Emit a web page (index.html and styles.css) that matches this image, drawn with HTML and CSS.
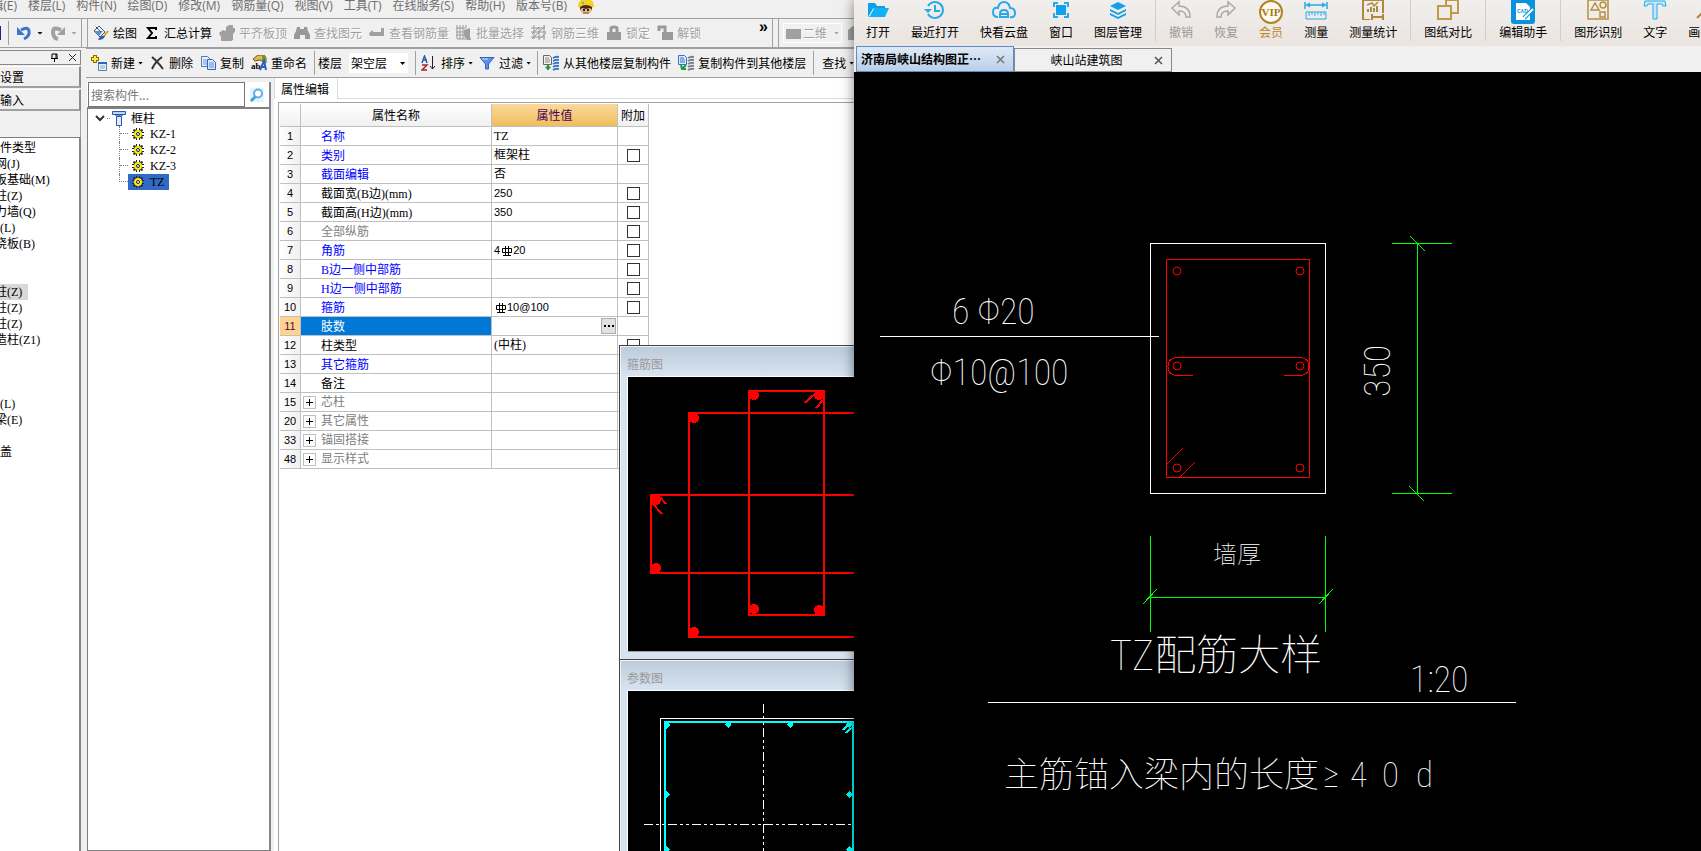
FILE: index.html
```html
<!DOCTYPE html>
<html lang="zh-CN">
<head>
<meta charset="utf-8">
<title>属性编辑</title>
<link rel="stylesheet" href="styles.css">
</head>
<body>
<main class="desktop">
<section class="app">
  <nav class="menu">
    <a href="#">辑(E)</a><a href="#">楼层(L)</a><a href="#">构件(N)</a><a href="#">绘图(D)</a><a href="#">修改(M)</a><a href="#">钢筋量(Q)</a><a href="#">视图(V)</a><a href="#">工具(T)</a><a href="#">在线服务(S)</a><a href="#">帮助(H)</a><a href="#">版本号(B)</a>
    <svg class="ico" viewBox="0 0 16 16"><path d="M2 8h12v4q-1 4-6 4t-6-4z" fill="#e9b98c"/><path d="M0 9Q0 1 8 1t8 8l-3 1Q8 6 3 10z" fill="#f6cf22"/><path d="M2 9q6-4 12 0v3l-2-2-4 1-4-1-2 2z" fill="#4a2a17"/><path d="M5 12h2M9 12h2" stroke="#222" stroke-width="2"/><path d="M5 15h6" stroke="#8a4a2a"/><circle cx="5" cy="5" r="1" fill="#3af"/></svg>
  </nav>

  <div class="bar bar-main">
    <div class="quick">
      <i class="save-edge"></i><i class="rule"></i>
      <button class="tool" aria-label="撤销"><svg class="ico" viewBox="0 0 16 16"><path d="M5 5Q12 1 13 6T8 14" fill="none" stroke="#3f74c9" stroke-width="3"/><path d="M1 2v8h8z" fill="#3f74c9"/></svg><i class="caret"></i></button>
      <button class="tool off" aria-label="恢复"><svg class="ico" viewBox="0 0 16 16"><path d="M11 5Q3 1 3 7t5 7" fill="none" stroke="#a0a0a0" stroke-width="4"/><path d="M15 2v8H7z" fill="#a0a0a0"/></svg><i class="caret"></i></button>
    </div>
    <div class="tools">
      <button class="tool"><svg class="ico" viewBox="0 0 16 16"><path d="M1 6l5-5 6 6-5 5z" fill="#eef4fb" stroke="#456" /><path d="M1 6h9l-4 5z" fill="#5b8fd8"/><path d="M3 2l5 5" stroke="#456"/><path d="M15 6l-4 5" stroke="#d8a020" stroke-width="2"/><path d="M5 15q2-5 7-4-1 4-7 4z" fill="#2d5fb8"/></svg>绘图</button>
      <button class="tool"><svg class="ico" viewBox="0 0 16 16"><path d="M12 5V3H4l4 5-4 5h8v-2" fill="none" stroke="#000" stroke-width="2"/></svg>汇总计算</button>
      <button class="tool off"><svg class="ico" viewBox="0 0 16 16"><path d="M0 8l4-3 3 1V2l3-2h4v3h2v4l-2 2v6l-2 1H2v-4z" fill="#a0a0a0"/></svg>平齐板顶</button>
      <button class="tool off"><svg class="ico" viewBox="0 0 16 16"><path d="M3 2h3v2h4V2h3l1 4 2 4v4h-5v-4H6v4H0v-4l2-4z" fill="#999"/></svg>查找图元</button>
      <button class="tool off"><svg class="ico" viewBox="0 0 16 16"><path d="M0 8l4-3v2h8V3h3v8H1z" fill="#a0a0a0"/></svg>查看钢筋量</button>
      <button class="tool off"><svg class="ico" viewBox="0 0 16 16"><path d="M1 0v14h9M4 0v14M7 0v14M0 3h10M0 7h8M0 10h8M10 0v3" fill="none" stroke="#999"/><path d="M8 5l6-2v8l1 4h-4l-3-4z" fill="#a0a0a0"/></svg>批量选择</button>
      <button class="tool off"><svg class="ico" viewBox="0 0 16 16"><path d="M0 3h14M0 7h15M0 12h14M3 0v14M8 2v13M13 0v15M1 14L14 1M1 9l7-7M8 14l7-6" fill="none" stroke="#999"/></svg>钢筋三维</button>
      <button class="tool off"><svg class="ico" viewBox="0 0 16 16"><path d="M1 7h14v8H1z" fill="#999"/><path d="M5 7V3q0-1 3-1t3 1v4" fill="none" stroke="#999" stroke-width="3"/></svg>锁定</button>
      <button class="tool off"><svg class="ico" viewBox="0 0 16 16"><path d="M5 7h11v8H5z" fill="#999"/><path d="M2 6V2h6v5" fill="none" stroke="#999" stroke-width="3"/></svg>解锁</button>
      <span class="more">»</span>
    </div>
    <div class="view">
      <button class="tool off mode"><svg class="ico" viewBox="0 0 16 16"><path d="M0 4h15v10H0z" fill="#a0a0a0"/></svg>二维<i class="caret"></i></button>
      <svg class="ico edge" viewBox="0 0 16 16"><path d="M0 5l5-4h11v14H0z" fill="#a0a0a0"/></svg>
    </div>
  </div>

  <div class="work">
    <aside class="side">
      <div class="side-title">
        <svg class="mini" viewBox="0 0 9 9"><path d="M2 5V1h5v4M1 5.500h7M4.500 6v3M6 1v4" fill="none" stroke="#000"/></svg>
        <svg class="mini" viewBox="0 0 9 9"><path d="M1 1l7 7M8 1L1 8" fill="none" stroke="#222"/></svg>
      </div>
      <button class="side-btn">设置</button>
      <button class="side-btn">输入</button>
      <div class="side-gap"></div>
      <ul class="kinds">
        <li class="in">件类型</li><li>网(J)</li><li>板基础(M)</li><li>柱(Z)</li><li>力墙(Q)</li><li class="in">(L)</li><li>浇板(B)</li><li></li><li></li><li><span class="on">柱(Z)</span></li><li>柱(Z)</li><li>柱(Z)</li><li>造柱(Z1)</li><li></li><li></li><li></li><li class="in">(L)</li><li>梁(E)</li><li></li><li class="in">盖</li>
      </ul>
    </aside>

    <div class="center">
      <div class="bar bar-item">
        <div class="grp">
          <button class="tool"><svg class="ico" viewBox="0 0 16 16"><path d="M4 0v8M0 4h8" stroke="#8a7000" stroke-width="4"/><path d="M4 1v6M1 4h6" stroke="#ffe84a" stroke-width="2"/><path d="M7.500 7.500h8v8h-8z" fill="#e6f0fc" stroke="#5b7fae"/><path d="M7 8h9" stroke="#2d66b8" stroke-width="2"/><path d="M9 11h5M9 13h5" stroke="#8aa8cc"/></svg>新建<i class="caret"></i></button>
          <button class="tool"><svg class="ico" viewBox="0 0 16 16"><path d="M3 2q5 4 11 12M13 2Q6 7 3 14" fill="none" stroke="#333" stroke-width="2"/></svg>删除</button>
          <button class="tool"><svg class="ico" viewBox="0 0 16 16"><path d="M1.500 1.500h6l2 2v8h-8z" fill="#e8f1fc" stroke="#4a78b8"/><path d="M3 5h4M3 7h4M3 9h4" stroke="#6b96d0"/><path d="M7.500 4.500h5l3 3v7h-8z" fill="#dbe9fa" stroke="#3568b0"/><path d="M9 8h5M9 10h5M9 12h5" stroke="#5b8fd8"/></svg>复制</button>
          <button class="tool"><svg class="ico" viewBox="0 0 16 16"><path d="M2 4l5-4h6l2 3v5L9 5 4 6z" fill="#e0b850" stroke="#6b5520"/><path d="M11 1h4v5h-4z" fill="#6a9a40"/><text x="0" y="14" class="t-ab">ab</text><path d="M9 15l4-9 2 9M10 12h5" fill="none" stroke="#2d5fc0" stroke-width="2"/></svg>重命名</button>
        </div>
        <div class="grp floor">
          <label for="floor">楼层</label>
          <span class="pick"><select id="floor"><option>架空层</option></select><i class="caret"></i></span>
        </div>
        <div class="grp">
          <button class="tool"><svg class="ico" viewBox="0 0 16 16"><path d="M1 8l2.500-7L6 8M2 5h4" fill="none" stroke="#2d5fb0" stroke-width="1.500"/><path d="M1 10h5l-5 5h5" fill="none" stroke="#a02828" stroke-width="1.500"/><path d="M11.500 1v13M9 11l2.500 3 2.500-3" fill="none" stroke="#222"/></svg>排序<i class="caret"></i></button>
          <button class="tool"><svg class="ico" viewBox="0 0 16 16"><path d="M1 2.500h14L9.500 9v5h-3V9z" fill="#5a93e8" stroke="#3464b4"/><path d="M3 4h6" stroke="#cfe2ff"/></svg>过滤<i class="caret"></i></button>
        </div>
        <div class="grp">
          <button class="tool"><svg class="ico" viewBox="0 0 16 16"><path d="M.5.500h6l2 2v7h-8z" fill="#f2f2f2" stroke="#666"/><path d="M2 3h4M2 5h5M2 7h5" stroke="#888"/><path d="M5 10v5M2.500 12.500h5" stroke="#1c9b3c" stroke-width="2"/><path d="M10 3q3-2 6-1M10 6q3-2 6-1M10 9q3-2 6-1M10 12q3-2 6-1M10 15q3-2 6-1" fill="none" stroke="#3b73c4" stroke-width="2"/></svg>从其他楼层复制构件</button>
          <button class="tool"><svg class="ico" viewBox="0 0 16 16"><path d="M.5.500h6l2 2v7h-8z" fill="#dceafc" stroke="#3b73c4"/><path d="M2 3h4M2 5h5M2 7h5" stroke="#3b73c4"/><path d="M3 10l1 4 4 0M4 14l4-4" fill="none" stroke="#1c9b3c" stroke-width="2"/><path d="M10 3q3-2 6-1M10 6q3-2 6-1M10 9q3-2 6-1M10 12q3-2 6-1M10 15q3-2 6-1" fill="none" stroke="#76808c" stroke-width="2"/></svg>复制构件到其他楼层</button>
        </div>
        <div class="grp find"><button class="tool">查找<i class="caret"></i></button></div>
      </div>

      <div class="panes">
        <section class="tree-pane">
          <div class="search">
            <input type="text" placeholder="搜索构件..." aria-label="搜索构件">
            <button aria-label="搜索"><svg class="ico" viewBox="0 0 16 16"><path d="M1 1h14v14H1z" fill="#e6f3fc"/><circle cx="9" cy="6.500" r="4" fill="#fff" stroke="#5cb0e8" stroke-width="2"/><path d="M6.500 9.500L2 14" stroke="#48a0dc" stroke-width="3"/></svg></button>
          </div>
          <div class="tree">
            <div class="root">
              <svg class="chev" viewBox="0 0 10 8"><path d="M1 2l4 4 4-4" fill="none" stroke="#333" stroke-width="2"/></svg>
              <i class="link"></i>
              <svg class="ico" viewBox="0 0 16 16"><path d="M1.500 1.500h13v3h-13z" fill="#bcd6f8" stroke="#2b57a8"/><path d="M4 5.500h8" stroke="#5b8fd8"/><path d="M5.500 6.500h5v9h-5z" fill="#dcebff" stroke="#2b57a8"/></svg>
              <span>框柱</span>
            </div>
            <ul>
              <li><i class="link"></i><span class="leaf"><svg class="gear" viewBox="0 0 12 12"><use href="#gear"/></svg>KZ-1</span></li>
              <li><i class="link"></i><span class="leaf"><svg class="gear" viewBox="0 0 12 12"><use href="#gear"/></svg>KZ-2</span></li>
              <li><i class="link"></i><span class="leaf"><svg class="gear" viewBox="0 0 12 12"><use href="#gear"/></svg>KZ-3</span></li>
              <li><i class="link"></i><span class="leaf sel"><svg class="gear" viewBox="0 0 12 12"><use href="#gear"/></svg>TZ</span></li>
            </ul>
          </div>
        </section>

        <section class="props">
          <div class="tabs"><button class="tab">属性编辑</button></div>
          <div class="sheet">
            <table>
              <thead><tr><th class="c-no"></th><th class="c-name">属性名称</th><th class="c-val hot">属性值</th><th class="c-add">附加</th></tr></thead>
              <tbody>
                <tr><th>1</th><td class="key">名称</td><td>TZ</td><td></td></tr>
                <tr><th>2</th><td class="key">类别</td><td>框架柱</td><td><input type="checkbox" aria-label="附加 类别"></td></tr>
                <tr><th>3</th><td class="key">截面编辑</td><td>否</td><td></td></tr>
                <tr><th>4</th><td>截面宽(B边)(mm)</td><td class="num">250</td><td><input type="checkbox" aria-label="附加 截面宽"></td></tr>
                <tr><th>5</th><td>截面高(H边)(mm)</td><td class="num">350</td><td><input type="checkbox" aria-label="附加 截面高"></td></tr>
                <tr><th>6</th><td class="dim">全部纵筋</td><td></td><td><input type="checkbox" aria-label="附加 全部纵筋"></td></tr>
                <tr><th>7</th><td class="key">角筋</td><td class="num">4<svg class="bar-sym" viewBox="0 0 10 11"><use href="#rebar"/></svg>20</td><td><input type="checkbox" aria-label="附加 角筋"></td></tr>
                <tr><th>8</th><td class="key">B边一侧中部筋</td><td></td><td><input type="checkbox" aria-label="附加 B边"></td></tr>
                <tr><th>9</th><td class="key">H边一侧中部筋</td><td></td><td><input type="checkbox" aria-label="附加 H边"></td></tr>
                <tr><th>10</th><td class="key">箍筋</td><td class="num"><svg class="bar-sym" viewBox="0 0 10 11"><use href="#rebar"/></svg>10@100</td><td><input type="checkbox" aria-label="附加 箍筋"></td></tr>
                <tr class="cur"><th>11</th><td>肢数</td><td><button class="dots" aria-label="编辑肢数"><i></i><i></i><i></i></button></td><td></td></tr>
                <tr><th>12</th><td>柱类型</td><td>(中柱)</td><td><input type="checkbox" aria-label="附加 柱类型"></td></tr>
                <tr><th>13</th><td class="key">其它箍筋</td><td></td><td></td></tr>
                <tr><th>14</th><td>备注</td><td></td><td></td></tr>
                <tr><th>15</th><td class="dim fold"><button class="plus" aria-label="展开 芯柱"></button>芯柱</td><td></td><td></td></tr>
                <tr><th>20</th><td class="dim fold"><button class="plus" aria-label="展开 其它属性"></button>其它属性</td><td></td><td></td></tr>
                <tr><th>33</th><td class="dim fold"><button class="plus" aria-label="展开 锚固搭接"></button>锚固搭接</td><td></td><td></td></tr>
                <tr><th>48</th><td class="dim fold"><button class="plus" aria-label="展开 显示样式"></button>显示样式</td><td></td><td></td></tr>
              </tbody>
            </table>
          </div>
        </section>
      </div>
    </div>
  </div>

  <div class="floaters">
    <section class="win">
      <h2>箍筋图</h2>
      <svg class="plot" viewBox="628 377 226 274" preserveAspectRatio="xMinYMin slice">
        <g fill="none" stroke="#f00" stroke-width="2"><path d="M749 391h75v224h-75zM860 413H689v224h171M860 495H651v78h209"/><path d="M805 403q6-7 12-10M816 408l7-8M660 497l6 7M653 504l9 10"/></g>
        <g fill="#f00"><circle cx="754" cy="395" r="5"/><circle cx="819" cy="395" r="5"/><circle cx="694" cy="418" r="5"/><circle cx="656" cy="500" r="5"/><circle cx="656" cy="568" r="5"/><circle cx="754" cy="609" r="5"/><circle cx="819" cy="610" r="5"/><circle cx="694" cy="632" r="5"/></g>
      </svg>
    </section>
    <section class="win last">
      <h2>参数图</h2>
      <svg class="plot" viewBox="628 691 226 160" preserveAspectRatio="xMinYMin slice">
        <path d="M660.500 860V718.500H860" fill="none" stroke="#fff"/>
        <path d="M763.500 704v160M644 824.500h214" stroke="#fff" stroke-dasharray="9 3 3 3 3 3"/>
        <path d="M665 860V722h188v138M843 730q3-4 9-6M846 733q2-3 7-6" fill="none" stroke="#0ff" stroke-width="2"/>
        <path d="M666 721l4 4-4 4zM728.500 721l3 3.500-3 3.500-3-3.500zM790.500 721l3 3.500-3 3.500-3-3.500zM849.500 721l3 3.500-3 3.500-3-3.500zM666 791l4 3.500-4 3.500zM849.500 791l3 3.500-3 3.500-3-3.500zM666 846l4 3.500-4 3.500zM849.500 846l3 3.500-3 3.500-3-3.500z" fill="#0ff"/>
      </svg>
    </section>
  </div>
</section>

<section class="cad">
  <div class="ribbon">
    <button class="cmd"><svg class="big" viewBox="0 0 24 20"><path d="M2 17V3h7l2 3h8v3H7z" fill="#0aa0ea"/><path d="M7 8h16l-4 9H3z" fill="#12b0f5"/><path d="M7.500 8.500L3.500 16" stroke="#eee"/></svg>打开</button>
    <button class="cmd"><svg class="big" viewBox="0 0 24 20"><path d="M5 6a8 8 0 1 1 0 8" fill="none" stroke="#28a9e8" stroke-width="2"/><path d="M1 9h8l-4 4z" fill="#28a9e8"/><path d="M12 5v6h5" fill="none" stroke="#28a9e8" stroke-width="2"/></svg>最近打开</button>
    <button class="cmd"><svg class="big" viewBox="0 0 24 20"><path d="M6 17Q1 17 1 12t5-4Q7 2 12 2t6 6q5 0 5 5t-5 4" fill="none" stroke="#28a9e8" stroke-width="2"/><path d="M8 17v-3q0-4 4-4t4 4v3zM8 14h8" fill="none" stroke="#28a9e8" stroke-width="2"/></svg>快看云盘</button>
    <button class="cmd"><svg class="big" viewBox="0 0 24 20"><path d="M7 5h10v10H7z" fill="#12a0ea"/><path d="M5 7V3h4M15 3h4v4M19 13v4h-4M9 17H5v-4" fill="none" stroke="#28a9e8" stroke-width="2"/></svg>窗口</button>
    <button class="cmd"><svg class="big" viewBox="0 0 24 20"><path d="M12 2l8 4-8 4-8-4z" fill="#12a0ea"/><path d="M4 9l8 4 8-4v2l-8 4-8-4zM4 13l8 4 8-4v2l-8 4-8-4z" fill="#12a0ea"/></svg>图层管理</button>
    <i class="split"></i>
    <button class="cmd off"><svg class="big" viewBox="0 0 24 20"><path d="M3 8l7-6v4q11 0 11 11h-4q0-6-7-6v4z" fill="none" stroke="#aaa" stroke-width="1.500"/></svg>撤销</button>
    <button class="cmd off"><svg class="big" viewBox="0 0 24 20"><path d="M21 8l-7-6v4Q3 6 3 17h4q0-6 7-6v4z" fill="none" stroke="#aaa" stroke-width="1.500"/></svg>恢复</button>
    <button class="cmd gold"><svg class="big tall" viewBox="0 0 24 24"><circle cx="12" cy="12" r="11" fill="#fffaf0" stroke="#b08428" stroke-width="2"/><text x="12" y="16" text-anchor="middle" class="t-vip">VIP</text></svg>会员</button>
    <button class="cmd"><svg class="big" viewBox="0 0 24 20"><path d="M1 2v7M23 2v7M2 5h20M6 3L3 5l3 2M18 3l3 2-3 2" fill="none" stroke="#28a9e8" stroke-width="1.500"/><path d="M2 12h20v7H2zM5 12v4M8 12v3M11 12v4M14 12v3M17 12v4M20 12v3" fill="none" stroke="#28a9e8"/></svg>测量</button>
    <button class="cmd"><svg class="big" viewBox="0 0 24 20"><path d="M9 20H2V0h20v13M11 14v6M22 14v6M12 17h9" fill="none" stroke="#b08a3c" stroke-width="2"/><path d="M6 5l5-2 2 3 4-4" fill="none" stroke="#b08a3c" stroke-width="1.500"/><path d="M7 12v-3M10 12V7M13 12V8M16 12V6" fill="none" stroke="#b08a3c" stroke-width="2"/></svg>测量统计</button>
    <i class="split"></i>
    <button class="cmd"><svg class="big" viewBox="0 0 24 20"><path d="M10 6V0h12v13h-7" fill="none" stroke="#c09a48" stroke-width="2"/><path d="M2 6h13v13H2z" fill="none" stroke="#c09a48" stroke-width="2"/></svg>图纸对比</button>
    <i class="split"></i>
    <button class="cmd"><svg class="big tall" viewBox="0 0 24 24"><path d="M0 0h24v21q0 3-3 3H3q-3 0-3-3z" fill="#0a92dc"/><path d="M5 3h10l4 4v13H5z" fill="#fff"/><text x="6" y="13" class="t-cad">CAD</text><path d="M21 10l-8 8" stroke="#0a92dc" stroke-width="4"/><path d="M22 9l-8 8-2 2" stroke="#fff" stroke-width="2"/></svg>编辑助手</button>
    <i class="split"></i>
    <button class="cmd"><svg class="big" viewBox="0 0 24 20"><path d="M2 0h20v19H2zM5 10l4-7 4 7zM14 12h5v5h-5z" fill="none" stroke="#b89040" stroke-width="1.500"/><circle cx="17" cy="5" r="3" fill="none" stroke="#b89040" stroke-width="1.500"/></svg>图形识别</button>
    <button class="cmd"><svg class="big" viewBox="0 0 24 20"><path d="M2 1h20l1 5h-3l-1-2h-5v15h-4V4H5L4 6H1z" fill="#c4e8fa" stroke="#28a9e8"/></svg>文字</button>
    <button class="cmd cut"><svg class="big" viewBox="0 0 24 20"><path d="M5 18L20 3" stroke="#b08a3c" stroke-width="2"/></svg>画</button>
  </div>
  <div class="files">
    <div class="file active"><a href="#">济南局峡山结构图正…</a><button aria-label="关闭济南局峡山结构图"><svg class="mini" viewBox="0 0 9 9"><path d="M1 1l7 7M8 1L1 8" fill="none" stroke="#777" stroke-width="1.500"/></svg></button></div>
    <div class="file"><a href="#">峡山站建筑图</a><button aria-label="关闭峡山站建筑图"><svg class="mini" viewBox="0 0 9 9"><path d="M1 1l7 7M8 1L1 8" fill="none" stroke="#555" stroke-width="1.500"/></svg></button></div>
  </div>
  <svg class="drawing" viewBox="854 72 847 779" preserveAspectRatio="xMidYMin meet">
    <g class="wh"><path d="M1150.500 243.500h175v250h-175z"/><path d="M880 336.500h279M988 702.500h528"/></g>
    <g class="rd">
      <path d="M1166.500 259.500h143v218h-143zM1193 375.500h-18q-7-2-7-9t7-9h127q7 2 7 9t-7 9h-18M1167 464l16-16M1180 477l15-15"/>
      <circle cx="1177" cy="271" r="4"/><circle cx="1300" cy="271" r="4"/><circle cx="1177" cy="366" r="4"/><circle cx="1300" cy="366" r="4"/><circle cx="1177" cy="468" r="4"/><circle cx="1300" cy="468" r="4"/>
    </g>
    <g class="gn"><path d="M1417.500 243v250M1392 243.500h60M1392 493.500h60M1410 236l15 15M1409 486l15 15"/><path d="M1150.500 536v96M1325.500 536v96M1150 597.500h175M1143 604l14-15M1319 604l14-15"/></g>
    <g class="lettering">
      <text x="952" y="324" class="t-mid">6 Φ20</text>
      <text x="930" y="385" class="t-mid">Φ10@100</text>
      <text transform="translate(1390 397) rotate(-90)" class="t-mid">350</text>
      <text x="1237" y="563" text-anchor="middle" class="t-wall">墙厚</text>
      <text x="1110" y="670" class="t-title">TZ配筋大样</text>
      <text x="1410" y="692" class="t-mid">1:20</text>
      <text x="1004" y="787" class="t-note">主筋锚入梁内的长度<tspan x="1323">≥</tspan><tspan x="1350">4</tspan><tspan x="1382">0</tspan><tspan x="1416">d</tspan></text>
    </g>
  </svg>
</section>
</main>

<svg class="defs" aria-hidden="true">
  <symbol id="gear" viewBox="0 0 12 12"><path d="M4 0h1v2h2V0h1v2l2-1 1 1-1 2h2v1h-2v2h2v1h-2l1 2-1 1-2-1v2H7v-2H5v2H4v-2l-2 1-1-1 1-2H0V7h2V5H0V4h2L1 2l1-1 2 1z" fill="#222"/><circle cx="6" cy="6" r="4" fill="#f6ea20"/><circle cx="6" cy="6" r="1.500" fill="#fff" stroke="#222"/></symbol>
  <symbol id="rebar" viewBox="0 0 10 11"><path d="M.5 3.500h9v4h-9zM3.500 1v9M6.500 1v9M1 10.500h8" fill="none" stroke="#000"/></symbol>
</svg>
</body>
</html>
```
FILE: styles.css
```css
* { box-sizing: border-box; }
html, body { height: 100%; }
body {
  margin: 0;
  overflow: hidden;
  font: 12px/16px "Noto Sans CJK SC", sans-serif;
  color: #000;
}
button, input, select { font: inherit; color: inherit; margin: 0; padding: 0; border: 0; background: none; }
a { color: inherit; text-decoration: none; }
ul { list-style: none; margin: 0; padding: 0; }
i { display: block; font-style: normal; }
.defs { position: absolute; width: 0; height: 0; }
.ico { width: 16px; height: 16px; flex: none; display: block; }

.desktop { display: grid; grid-template-columns: 854fr 847fr; height: 100vh; }
.app { position: relative; display: flex; flex-direction: column; min-width: 0; overflow: hidden; background: #f0f0f0; }

.menu {
  display: flex;
  align-items: center;
  gap: 11px;
  height: 19px;
  padding-bottom: 6px;
  border-bottom: 1px solid #a0a0a0;
  color: #6e6e6e;
  white-space: nowrap;
  font-family: "Open Sans", "Noto Sans CJK SC", sans-serif;
  line-height: 12px;
  flex: none;
}
.menu a:first-child { width: 17px; display: flex; justify-content: flex-end; }

.bar { display: flex; align-items: center; white-space: nowrap; flex: none; }
.bar-main { height: 29px; border-bottom: 1px solid #a0a0a0; align-items: stretch; }
.tool { display: flex; align-items: center; gap: 4px; flex: none; }
.tool.off { color: #a0a0a0; text-shadow: 1px 1px #fff; }
.caret { width: 5px; height: 3px; background: currentColor; clip-path: polygon(0 0, 100% 0, 50% 100%); }
.tool .caret { margin-left: -1px; margin-right: -1px; }
.quick { display: flex; align-items: center; width: 82px; border-right: 1px solid #a0a0a0; flex: none; }
.quick .tool { margin-left: 7px; }
.quick .tool .caret { width: 6px; margin: 0 0 0 1px; }
.save-edge { width: 1px; height: 14px; background: #22227a; }
.rule { width: 1px; height: 24px; margin: 0 0 0 7px; background: #a0a0a0; }
.tools { display: flex; align-items: center; gap: 7px; flex: 1; margin-left: 5px; padding: 0 4px 0 5px; border-left: 1px solid #a0a0a0; border-right: 1px solid #a0a0a0; min-width: 0; overflow: hidden; }
.more { margin-left: auto; align-self: flex-start; font: 700 16px/16px "Liberation Sans", sans-serif; }
.view { display: flex; align-items: center; gap: 6px; width: 76px; flex: none; margin-left: 5px; border-left: 1px solid #a0a0a0; padding-left: 4px; }
.mode { border: 1px solid #fff; height: 20px; width: 59px; padding: 0 2px; gap: 1px; }
.mode .caret { margin-left: auto; margin-right: 0; }

.work { display: flex; flex: 1; min-height: 0; }
.side { width: 81px; flex: none; padding-top: 2px; display: flex; flex-direction: column; margin-right: 5px; overflow: hidden; }
.side-title { height: 15px; flex: none; border: 1px solid #888; border-left: 0; display: flex; align-items: center; justify-content: flex-end; gap: 9px; padding-right: 3px; }
.mini { width: 9px; height: 9px; display: block; }
.side-btn { height: 22px; flex: none; margin-top: 1px; text-align: left; border-style: solid; border-width: 1px 2px 2px 0; border-color: #fff #8c8c8c #a0a0a0; }
.side-gap { height: 26px; flex: none; border-right: 1px solid #a0a0a0; }
.kinds { flex: 1; background: #fff; border-top: 1px solid #808080; border-right: 2px solid #85858d; padding-top: 2px; font-family: "Liberation Serif", "Noto Sans CJK SC", serif; white-space: nowrap; overflow: hidden; }
.kinds li { height: 16px; margin-left: -5px; }
.kinds .in { margin-left: 0; }
.kinds .on { display: inline-block; background: #d9d9d9; padding-right: 6px; }

.center { flex: 1; min-width: 0; display: flex; flex-direction: column; overflow: hidden; }
.bar-item { height: 30px; border-bottom: 1px solid #a0a0a0; border-top: 1px solid #a0a0a0; padding-left: 5px; }
.grp { display: flex; align-items: center; gap: 7px; height: 24px; flex: none; }
.grp + .grp { border-left: 1px solid #a0a0a0; margin-left: 7px; padding-left: 5px; }
.grp.floor { padding-left: 3px; }
.grp.find { padding-left: 8px; }
.pick { display: flex; align-items: center; width: 59px; height: 20px; background: #fff; position: relative; }
.pick select { appearance: none; width: 100%; height: 20px; padding-left: 2px; outline: 0; }
.pick .caret { position: absolute; right: 3px; top: 9px; }

.panes { flex: 1; display: flex; min-height: 0; }
.tree-pane { width: 185px; flex: none; padding: 4px 0 0 1px; display: flex; flex-direction: column; }
.search { display: flex; height: 25px; padding-left: 1px; background: #fff; border-right: 2px solid #85858d; flex: none; }
.search input { width: 157px; border: 1px solid #777; padding: 0 2px; background: #fff; outline: 0; min-width: 0; }
.search input::placeholder { color: #777; opacity: 1; }
.search button { flex: 1; display: flex; align-items: center; justify-content: center; }
.tree { flex: 1; background: #fff; border: 1px solid #808080; border-top-width: 2px; border-right: 2px solid #85858d; padding: 1px 0 0 7px; }
.root { display: flex; align-items: center; height: 16px; }
.chev { width: 10px; height: 8px; }
.root .link { width: 3px; margin: 0 1px 0 2px; border-top: 1px dotted #808080; }
.root span { margin-left: 4px; }
.tree ul { margin-left: 24px; font-family: "Liberation Serif", "Noto Sans CJK SC", serif; }
.tree li { display: flex; align-items: flex-start; height: 16px; border-left: 1px dotted #808080; }
.tree li:last-child { border-left: 0; }
.tree li .link { width: 8px; height: 8px; border-bottom: 1px dotted #808080; }
.tree li:last-child .link { width: 9px; border-left: 1px dotted #808080; }
.leaf { display: flex; align-items: center; gap: 6px; height: 16px; padding: 0 4px; }
.leaf.sel { background: #316ac5; }
.gear { width: 12px; height: 12px; }

.props { flex: 1; min-width: 0; background: #fff; margin-left: 3px; display: flex; flex-direction: column; }
.tabs { display: flex; height: 21px; flex: none; }
.tabs::after { content: ""; flex: 1; border-bottom: 1px solid #dcdcdc; }
.tab { padding: 0 8px 0 6px; border-right: 1px solid #dcdcdc; border-left: 1px solid #dcdcdc; }
.sheet { flex: 1; margin: 3px 0 0 4px; padding: 1px 0 0 1px; border-top: 1px solid #a0a0a0; border-left: 1px solid #a0a0a0; overflow: hidden; }
table { width: 369px; table-layout: fixed; border-collapse: separate; border-spacing: 0; font-family: "Liberation Serif", "Noto Sans CJK SC", serif; }
th, td { height: 19px; padding: 0; border-right: 1px solid #c0c0c0; border-bottom: 1px solid #c0c0c0; font-weight: 400; line-height: 16px; white-space: nowrap; text-align: left; }
thead th { height: 23px; padding-top: 2px; text-align: center; background: linear-gradient(#fff, #f0f0f0); }
thead th.hot { background: linear-gradient(#fad99c, #f0bd5c); color: #50005a; }
.c-no { width: 21px; } .c-name { width: 191px; } .c-val { width: 126px; } .c-add { width: 31px; }
tbody th { text-align: center; background: linear-gradient(90deg, #fff, #f0f0f0); }
tbody th, .num { font-family: "Liberation Sans", sans-serif; font-size: 11px; }
tbody td:nth-child(2) { padding: 2px 0 0 20px; }
tbody td:nth-child(3) { padding-left: 2px; }
tbody td:nth-child(4) { text-align: center; }
.key { color: #00f; }
.dim { color: #808080; }
.cur th { background: #ffd38c; color: #50005a; }
.cur td:nth-child(2) { background: #0078d7; color: #fff; }
td input[type="checkbox"] { appearance: none; display: block; width: 13px; height: 13px; margin: 0 auto; border: 1px solid #333; background: #fff; }
.bar-sym { width: 10px; height: 11px; margin: 0 1px 0 2px; vertical-align: -2px; }
.dots { display: flex; align-items: center; justify-content: center; gap: 2px; width: 15px; height: 16px; margin: 0 1px 0 auto; border: 1px solid #adadad; background: #e1e1e1; }
.dots i { width: 2px; height: 2px; background: #000; }
tbody td.fold:nth-child(2) { padding: 0 0 0 2px; }
.plus { width: 13px; height: 13px; margin-right: 5px; vertical-align: -2px; border: 1px solid #c0c0c0; background: linear-gradient(#000, #000) center / 7px 1px no-repeat, linear-gradient(#000, #000) center / 1px 7px no-repeat, #fff; }

/* Tool windows floating over the property sheet */
.floaters { position: absolute; left: 619px; right: 0; top: 345px; bottom: 0; display: flex; flex-direction: column; }
.win { flex: none; display: flex; flex-direction: column; border: 1px solid #444; border-right: 0; border-bottom: 0; background: linear-gradient(#bccbda, #d7e3f0 30px); padding: 0 0 7px 7px; box-shadow: inset 1px 1px #eef3f8; }
.win.last { flex: 1; padding-bottom: 0; min-height: 0; }
.win h2 { margin: 0; height: 30px; padding-top: 10px; font-size: 12px; font-weight: 400; line-height: 16px; color: #999; }
.plot { display: block; width: 100%; height: 276px; background: #000; border: 1px solid #fff; border-right: 0; border-bottom-color: #a0a0a0; shape-rendering: crispEdges; }
.last .plot { flex: 1; height: auto; min-height: 0; border-bottom: 0; }

.cad { display: flex; flex-direction: column; min-width: 0; background: #000; overflow: hidden; box-shadow: 0 0 12px rgba(0, 0, 0, .5); position: relative; }
.ribbon { display: flex; gap: 21px; height: 46px; flex: none; padding-left: 12px; background: linear-gradient(#f0efed, #ebe4e0); white-space: nowrap; overflow: hidden; }
.cmd { display: flex; flex-direction: column; align-items: center; justify-content: flex-end; padding-bottom: 6px; flex: none; height: 46px; }
.cmd .big { width: 24px; height: 20px; margin-bottom: 4px; }
.cmd .tall { height: 24px; margin-bottom: 0; }
.cmd.off { color: #999; }
.cmd.gold { color: #b8862c; }
.cmd.cut { align-items: flex-start; }
.cmd.cut .big { margin-left: 4px; }
.split { width: 1px; height: 41px; margin: 0 -8px; background: #d0cecc; flex: none; }
.files { display: flex; align-items: flex-end; height: 26px; flex: none; padding-left: 2px; background: #f0f0f0; }
.file { width: 158px; height: 24px; display: flex; align-items: center; border: 1px solid #888; padding: 0 8px 0 4px; }
.file a { flex: 1; text-align: center; white-space: nowrap; }
.file.active { height: 26px; border: 1px solid #5f8cc8; background: linear-gradient(#dfe9f5, #b9cfe8); font-weight: 700; }
.file.active a { text-align: left; }

.drawing { flex: 1; display: block; width: 100%; min-height: 0; }
.drawing path, .drawing circle { fill: none; stroke-width: 1; }
.drawing path { shape-rendering: crispEdges; }
.wh { stroke: #fff; }
.rd { stroke: #f00; }
.gn { stroke: #0f0; }
.lettering { fill: #fff; font-family: "Roboto Condensed", "Liberation Sans Narrow", "Noto Sans CJK SC", sans-serif; font-weight: 100; }
.t-mid { font-size: 36px; }
.t-wall { font-size: 24px; }
.t-title { font-size: 42px; }
.t-note { font-size: 35px; }
.t-ab { font: 700 9px "Liberation Serif", serif; }
.t-vip { font: 700 11px "Liberation Serif", serif; fill: #a87818; }
.t-cad { font: 700 5px "Liberation Sans", sans-serif; fill: #0a92dc; }
```
